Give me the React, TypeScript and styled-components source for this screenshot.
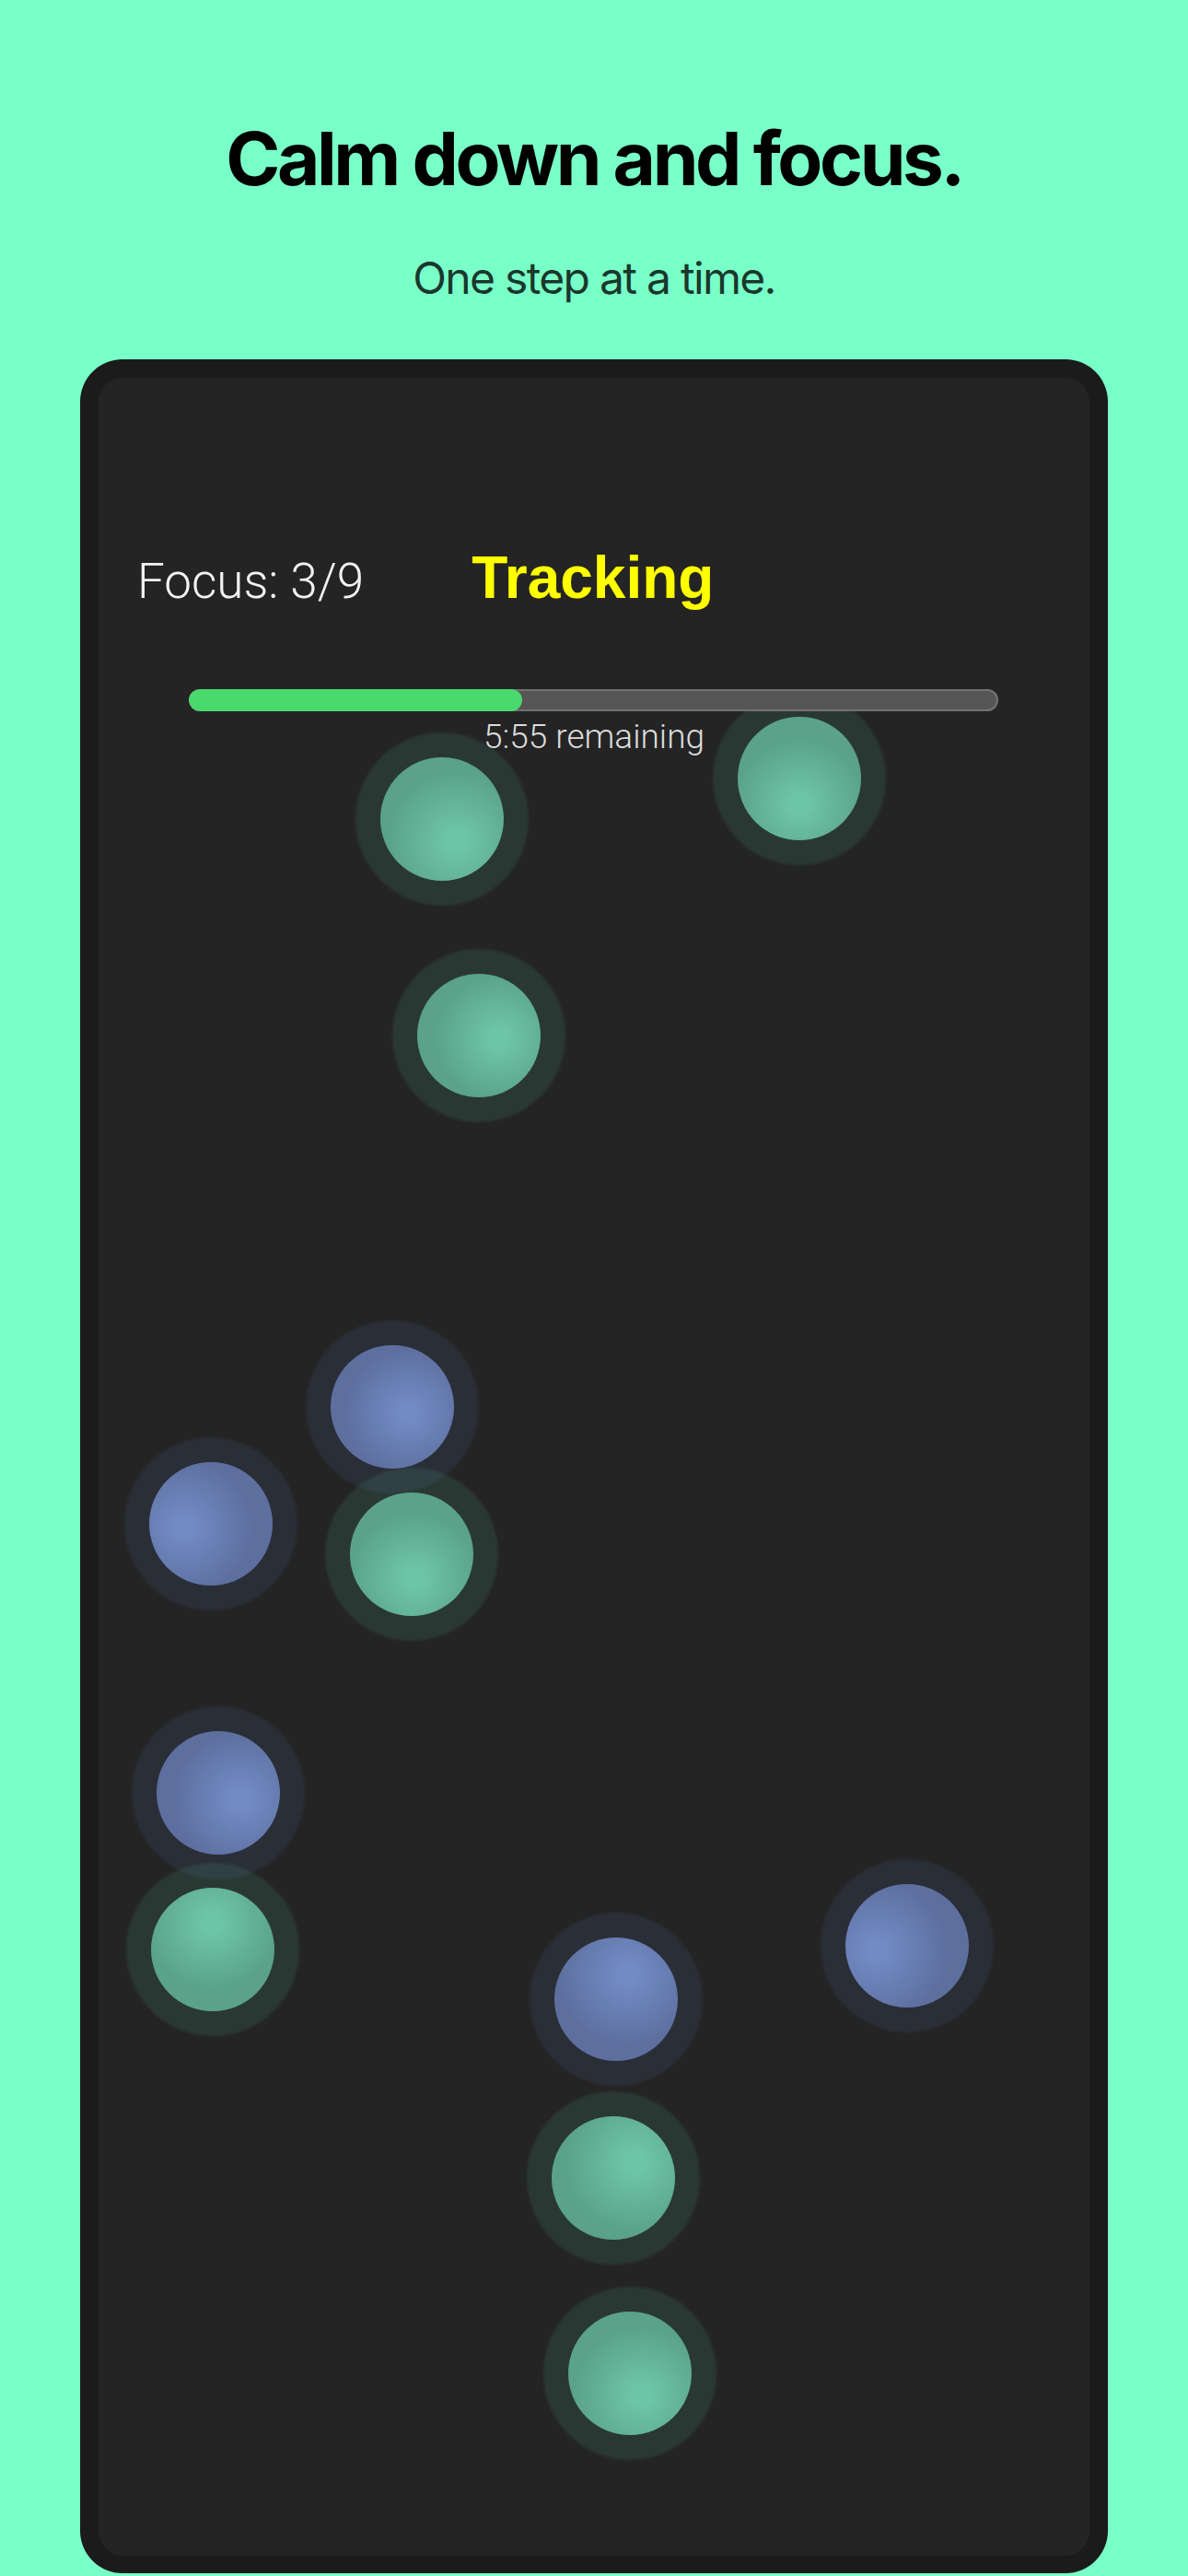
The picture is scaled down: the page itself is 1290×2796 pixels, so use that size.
import styled, { createGlobalStyle, css } from 'styled-components';

type Kind = 'green' | 'blue';

interface Orb {
  x: number;
  y: number;
  kind: Kind;
  hx: number;
  hy: number;
}

// centres inside the board, highlight offset from the centre (px)
const orbs: Orb[] = [
  { x: 373, y: 479, kind: 'green', hx: 16, hy: 24 },
  { x: 761, y: 435, kind: 'green', hx: 0, hy: 28 },
  { x: 413, y: 714, kind: 'green', hx: 22, hy: 3 },
  { x: 319, y: 1117, kind: 'blue', hx: 17, hy: 6 },
  { x: 122, y: 1244, kind: 'blue', hx: -29, hy: 3 },
  { x: 340, y: 1277, kind: 'green', hx: 3, hy: 26 },
  { x: 130, y: 1536, kind: 'blue', hx: 24, hy: 7 },
  { x: 124, y: 1706, kind: 'green', hx: -1, hy: -29 },
  { x: 878, y: 1702, kind: 'blue', hx: -33, hy: 5 },
  { x: 562, y: 1760, kind: 'blue', hx: 13, hy: -27 },
  { x: 559, y: 1954, kind: 'green', hx: 24, hy: -17 },
  { x: 577, y: 2166, kind: 'green', hx: 13, hy: 24 },
];

const ORB = 134;

const palette = {
  green: { light: '#6dc5a7', base: '#5aa28a', halo: 'rgba(94, 203, 161, 0.12)' },
  blue: { light: '#728bc4', base: '#5d6f9f', halo: 'rgba(90, 120, 200, 0.12)' },
};

export default function App() {
  return (
    <>
      <GlobalStyle />
      <Page>
        <Title>Calm down and focus.</Title>
        <Subtitle>One step at a time.</Subtitle>
        <Device>
          <Field>
            {orbs.map((o, i) => (
              <Dot
                key={i}
                $kind={o.kind}
                style={{
                  left: o.x - ORB / 2,
                  top: o.y - ORB / 2,
                  ['--hx' as string]: `${50 + (o.hx / ORB) * 100}%`,
                  ['--hy' as string]: `${50 + (o.hy / ORB) * 100}%`,
                }}
              />
            ))}
          </Field>
          <Hud>
            <StatusRow>
              <Counter>Focus: 3/9</Counter>
              <Mode>Tracking</Mode>
            </StatusRow>
            <Track>
              <Fill style={{ width: '41.2%' }} />
            </Track>
            <Remaining>5:55 remaining</Remaining>
          </Hud>
        </Device>
      </Page>
    </>
  );
}

const GlobalStyle = createGlobalStyle`
  html, body {
    margin: 0;
    padding: 0;
    background: #79ffc8;
  }
  * {
    box-sizing: border-box;
  }
`;

const Page = styled.div`
  min-height: 2796px;
  padding-top: 132px;
  display: flex;
  flex-direction: column;
  align-items: center;
  font-family: Inter, 'Liberation Sans', sans-serif;
`;

const Title = styled.h1`
  margin: 0;
  font-size: 80px;
  line-height: 1;
  font-weight: 700;
  letter-spacing: -3.4px;
  color: #000;
`;

const Subtitle = styled.p`
  margin: 66px 0 0;
  font-size: 48px;
  line-height: 1;
  font-weight: 400;
  letter-spacing: -1.7px;
  color: rgba(0, 0, 0, 0.8);
`;

const Device = styled.div`
  position: relative;
  margin-top: 64px;
  width: 1116px;
  height: 2403px;
  border: 20px solid #1b1b1b;
  border-bottom-width: 19px;
  border-radius: 46px;
  background: #242424;
  overflow: hidden;
`;

const Field = styled.div`
  position: absolute;
  inset: 0;
  isolation: isolate;
`;

const Dot = styled.div<{ $kind: Kind }>`
  position: absolute;
  width: ${ORB}px;
  height: ${ORB}px;
  border-radius: 50%;

  ${({ $kind }) => css`
    background: radial-gradient(
      circle at var(--hx) var(--hy),
      ${palette[$kind].light} 0%,
      ${palette[$kind].light} 8%,
      ${palette[$kind].base} 62%,
      ${palette[$kind].base} 100%
    );

    &::before {
      content: '';
      position: absolute;
      inset: -27px;
      border-radius: 50%;
      background: ${palette[$kind].halo};
      filter: blur(1.5px);
      z-index: -1;
    }
  `}
`;

const Hud = styled.div`
  position: relative;
  z-index: 1;
  padding-top: 185px;
  display: flex;
  flex-direction: column;
`;

const StatusRow = styled.div`
  display: flex;
  align-items: baseline;
  gap: 117px;
  padding-left: 42px;
`;

const Counter = styled.span`
  font-family: Roboto, 'Liberation Sans', sans-serif;
  font-weight: 300;
  font-size: 53px;
  line-height: 1;
  color: #f2f2f2;
`;

const Mode = styled.span`
  font-family: 'Liberation Sans', Arial, sans-serif;
  font-weight: 700;
  font-size: 64px;
  line-height: 1;
  color: #ffff00;
`;

const Track = styled.div`
  margin: 89px 99px 0 98px;
  height: 24px;
  border-radius: 12px;
  background: #555;
  box-shadow: inset 0 0 0 2px #727272;
  overflow: hidden;
`;

const Fill = styled.div`
  height: 100%;
  border-radius: 12px;
  background: #4ad96c;
`;

const Remaining = styled.div`
  margin-top: 9px;
  text-align: center;
  font-family: Roboto, 'Liberation Sans', sans-serif;
  font-weight: 300;
  font-size: 37px;
  line-height: 1;
  color: #dcdcdc;
`;
